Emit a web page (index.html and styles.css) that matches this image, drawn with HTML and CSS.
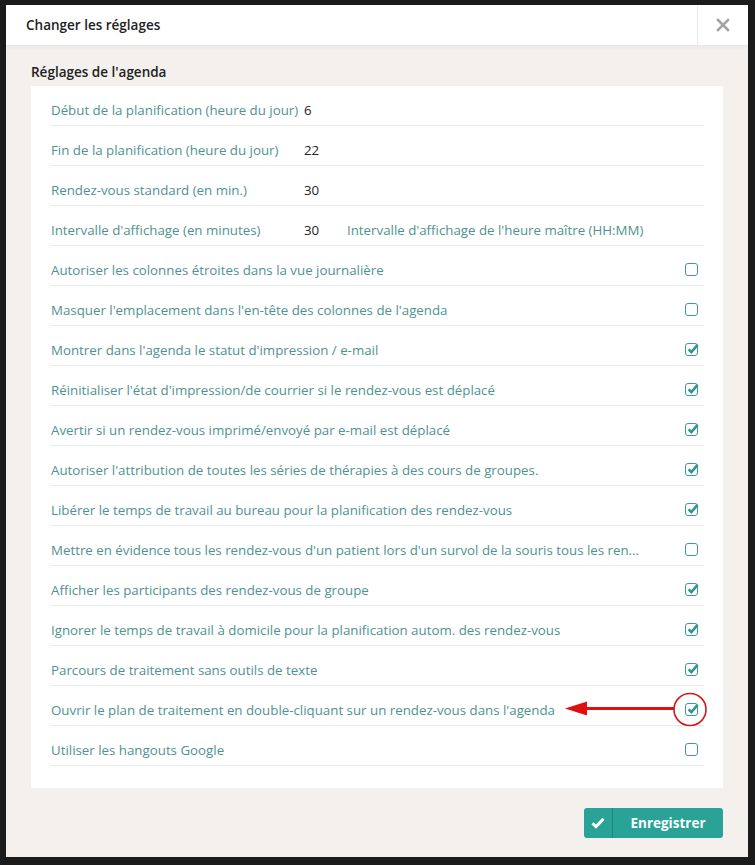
FILE: index.html
```html
<!DOCTYPE html>
<html lang="fr">
<head>
<meta charset="utf-8">
<title>Changer les réglages</title>
<link rel="stylesheet" href="styles.css">
</head>
<body>
<div class="dialog">
  <div class="header">
    <div class="title">Changer les réglages</div>
    <div class="close">
      <svg width="14" height="14" viewBox="0 0 14 14"><path d="M2 2 L12 12 M12 2 L2 12" stroke="#a3a3a3" stroke-width="2.6" stroke-linecap="square"/></svg>
    </div>
  </div>
  <div class="body">
    <div class="section-title">Réglages de l'agenda</div>
    <div class="panel">
      <div class="row"><span class="label">Début de la planification (heure du jour)</span><span class="input grow">6</span></div>
      <div class="row"><span class="label">Fin de la planification (heure du jour)</span><span class="input grow">22</span></div>
      <div class="row"><span class="label">Rendez-vous standard (en min.)</span><span class="input grow">30</span></div>
      <div class="row"><span class="label">Intervalle d'affichage (en minutes)</span><span class="input small">30</span><span class="label2">Intervalle d'affichage de l'heure maître (HH:MM)</span><span class="input last"></span></div>
      <div class="row cb-row"><span class="text">Autoriser les colonnes étroites dans la vue journalière</span><span class="cb"></span></div>
      <div class="row cb-row"><span class="text">Masquer l'emplacement dans l'en-tête des colonnes de l'agenda</span><span class="cb"></span></div>
      <div class="row cb-row"><span class="text">Montrer dans l'agenda le statut d'impression / e-mail</span><span class="cb on"><svg viewBox="0 0 15 15"><path d="M3.6 7.3 L6.3 10 L12.6 2.8" /></svg></span></div>
      <div class="row cb-row"><span class="text">Réinitialiser l'état d'impression/de courrier si le rendez-vous est déplacé</span><span class="cb on"><svg viewBox="0 0 15 15"><path d="M3.6 7.3 L6.3 10 L12.6 2.8" /></svg></span></div>
      <div class="row cb-row"><span class="text">Avertir si un rendez-vous imprimé/envoyé par e-mail est déplacé</span><span class="cb on"><svg viewBox="0 0 15 15"><path d="M3.6 7.3 L6.3 10 L12.6 2.8" /></svg></span></div>
      <div class="row cb-row"><span class="text">Autoriser l'attribution de toutes les séries de thérapies à des cours de groupes.</span><span class="cb on"><svg viewBox="0 0 15 15"><path d="M3.6 7.3 L6.3 10 L12.6 2.8" /></svg></span></div>
      <div class="row cb-row"><span class="text">Libérer le temps de travail au bureau pour la planification des rendez-vous</span><span class="cb on"><svg viewBox="0 0 15 15"><path d="M3.6 7.3 L6.3 10 L12.6 2.8" /></svg></span></div>
      <div class="row cb-row"><span class="text">Mettre en évidence tous les rendez-vous d'un patient lors d'un survol de la souris tous les ren...</span><span class="cb"></span></div>
      <div class="row cb-row"><span class="text">Afficher les participants des rendez-vous de groupe</span><span class="cb on"><svg viewBox="0 0 15 15"><path d="M3.6 7.3 L6.3 10 L12.6 2.8" /></svg></span></div>
      <div class="row cb-row"><span class="text">Ignorer le temps de travail à domicile pour la planification autom. des rendez-vous</span><span class="cb on"><svg viewBox="0 0 15 15"><path d="M3.6 7.3 L6.3 10 L12.6 2.8" /></svg></span></div>
      <div class="row cb-row"><span class="text">Parcours de traitement sans outils de texte</span><span class="cb on"><svg viewBox="0 0 15 15"><path d="M3.6 7.3 L6.3 10 L12.6 2.8" /></svg></span></div>
      <div class="row cb-row marked"><span class="text">Ouvrir le plan de traitement en double-cliquant sur un rendez-vous dans l'agenda</span><span class="cb on"><svg viewBox="0 0 15 15"><path d="M3.6 7.3 L6.3 10 L12.6 2.8" /></svg></span>
        <svg class="annot" width="160" height="40" viewBox="0 0 160 40">
          <path d="M20 18.5 H111" stroke="#e01010" stroke-width="3"/>
          <path d="M2 18.5 L24 11.5 L24 25.5 Z" fill="#e01010"/>
          <circle cx="127" cy="19.5" r="16" fill="none" stroke="#d41515" stroke-width="1.6"/>
        </svg>
      </div>
      <div class="row cb-row"><span class="text">Utiliser les hangouts Google</span><span class="cb"></span></div>
    </div>
    <div class="footer">
      <button class="save"><span class="save-icon"><svg width="14" height="12" viewBox="0 0 14 12"><path d="M1.5 6.3 L5 9.6 L12.5 1.8" stroke="#fff" stroke-width="3" fill="none"/></svg></span><span class="save-text">Enregistrer</span></button>
    </div>
  </div>
</div>
</body>
</html>
```
FILE: styles.css
```css
* { box-sizing: border-box; }
html, body { margin: 0; padding: 0; }
body {
  background: #1b1b1b;
  font-family: "Open Sans", "Noto Sans", sans-serif;
  font-size: 13.3px;
  width: 755px;
  height: 865px;
  padding: 5px 7px 0 6px;
}
.dialog {
  width: 742px;
  height: 852px;
  background: #f3f0ed;
  display: flex;
  flex-direction: column;
}
.header {
  height: 40px;
  background: #fff;
  display: flex;
  align-items: stretch;
  box-shadow: 0 2px 4px rgba(0,0,0,0.05);
  position: relative;
}
.title {
  flex: 1;
  padding-left: 20px;
  display: flex;
  align-items: center;
  font-size: 13.5px;
  font-weight: 600;
  color: #222;
}
.close {
  width: 51px;
  border-left: 1px solid #ececec;
  display: flex;
  align-items: center;
  justify-content: center;
}
.body {
  flex: 1;
  padding: 0 25px;
}
.section-title {
  padding-top: 17px;
  height: 41px;
  line-height: 20px;
  font-size: 13.5px;
  font-weight: 600;
  color: #222;
}
.panel {
  background: #fff;
  padding: 0 19px 22px 20px;
}
.row {
  height: 40px;
  border-bottom: 1px solid #e9e9e9;
  display: flex;
  align-items: stretch;
  line-height: 20px;
  position: relative;
}
.label {
  width: 250px;
  padding-top: 14px;
  color: #4f9390;
  white-space: nowrap;
}
.label2 {
  width: 307px;
  padding-top: 14px;
  padding-left: 5px;
  color: #4f9390;
  white-space: nowrap;
}
.input {
  padding-top: 14px;
  padding-left: 3px;
  color: #222;
  border-bottom: 1px solid #ececec;
  margin-bottom: -1px;
}
.grow { flex: 1; }
.small { width: 41px; }
.last { flex: 1; }
.cb-row { justify-content: space-between; }
.text {
  padding-top: 14px;
  color: #4f9390;
  white-space: nowrap;
}
.cb {
  margin-top: 17px;
  margin-right: 6px;
  width: 13px;
  height: 13px;
  border: 1.3px solid #3d9a93;
  border-radius: 3px;
  background: #fff;
  position: relative;
}
.cb svg {
  position: absolute;
  left: -1px;
  top: -2px;
  width: 15px;
  height: 15px;
  fill: none;
  stroke: #2f978f;
  stroke-width: 2.6;
}
.annot {
  position: absolute;
  left: 512px;
  top: 4px;
}
.footer {
  display: flex;
  justify-content: flex-end;
  padding-top: 20px;
}
.save {
  width: 139px;
  height: 30px;
  border: none;
  border-radius: 3px;
  background: #2aa397;
  padding: 0;
  display: flex;
  align-items: stretch;
  font-family: inherit;
  cursor: pointer;
}
.save-icon {
  width: 29px;
  border-right: 1px solid #23897f;
  display: flex;
  align-items: center;
  justify-content: center;
}
.save-text {
  flex: 1;
  display: flex;
  align-items: center;
  justify-content: center;
  color: #fff;
  font-weight: 700;
  font-size: 13.5px;
}
```
